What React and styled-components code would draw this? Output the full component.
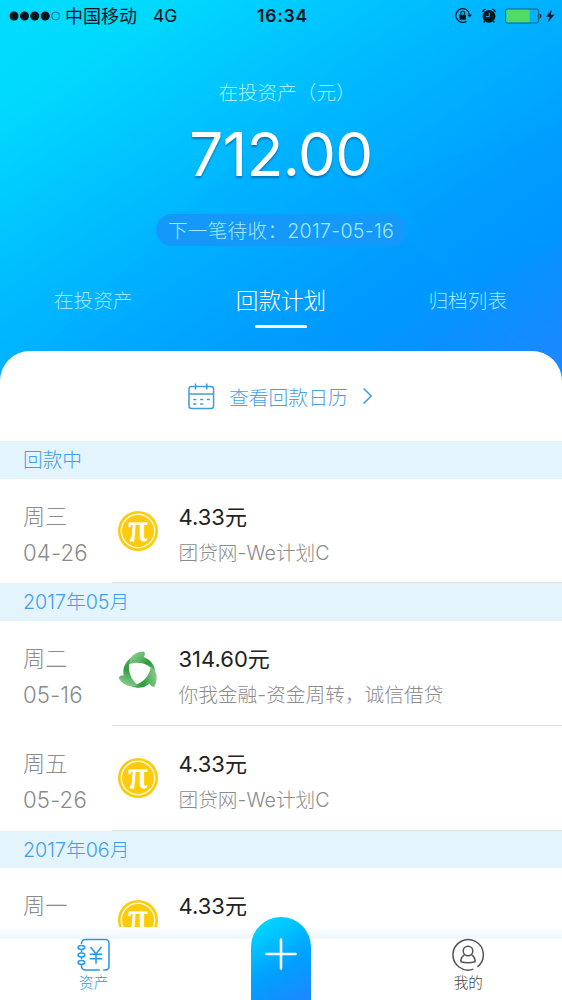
import React from "react";
import styled, { createGlobalStyle } from "styled-components";

const GlobalStyle = createGlobalStyle`
  * {
    box-sizing: border-box;
  }
  body {
    margin: 0;
    background: #fff;
    font-family: Inter, "Noto Sans CJK SC", sans-serif;
    font-weight: 300;
  }
`;

const Page = styled.div`
  position: relative;
  display: flex;
  flex-direction: column;
  width: 562px;
  height: 1000px;
  overflow: hidden;
  background: #fff;
`;

const Header = styled.header`
  position: relative;
  display: flex;
  flex-direction: column;
  align-items: center;
  flex: none;
  height: 391px;
  background: linear-gradient(146deg, #00dcff 0%, #00dafe 14%, #00b8ff 42%, #009eff 68%, #0096ff 80%, #1a88ff 96%);
`;

const Facets = styled.svg`
  position: absolute;
  top: 0;
  left: 0;
`;

const StatusBar = styled.div`
  position: relative;
  display: grid;
  grid-template-columns: 1fr 60px 1fr;
  align-items: center;
  width: 100%;
  height: 31px;
  padding: 0 6px 0 9px;
  color: #06141c;
  font-size: 17.5px;
  font-weight: 400;
`;

const StatusLeft = styled.div`
  display: flex;
  align-items: center;
  height: 30px;
`;

const Carrier = styled.span`
  margin: -1px 16px 0 4px;
  font-size: 18px;
`;

const Network = styled.span`
  font-size: 17.5px;
`;

const Clock = styled.div`
  font-size: 17.5px;
  font-weight: 600;
  text-align: center;
  white-space: nowrap;
  letter-spacing: 0.8px;
`;

const StatusRight = styled.div`
  display: flex;
  justify-content: flex-end;
`;

const Label = styled.div`
  position: relative;
  margin-top: 47px;
  padding-left: 12px;
  height: 30px;
  line-height: 30px;
  font-size: 19.6px;
  color: #a8f0ff;
`;

const Total = styled.div`
  position: relative;
  margin-top: 10px;
  height: 72px;
  line-height: 72px;
  font-size: 60px;
  font-weight: 400;
  letter-spacing: -0.5px;
  color: #fff;
  text-shadow: 0 2px 2px rgba(0, 60, 120, 0.5);
`;

const NextPay = styled.div`
  position: relative;
  margin-top: 24px;
  width: 251px;
  height: 32px;
  line-height: 34px;
  border-radius: 16px;
  background: #1499fb;
  font-size: 19.6px;
  letter-spacing: 0.3px;
  text-align: center;
  white-space: nowrap;
  color: #a3e9ff;
`;

const Tabs = styled.div`
  position: relative;
  display: grid;
  grid-template-columns: repeat(3, 1fr);
  width: 100%;
  margin-top: 37px;
`;

const Tab = styled.div`
  display: flex;
  flex-direction: column;
  align-items: center;
  margin-left: ${(props) => (props.$active ? "0" : "-1px")};
  line-height: 36px;
  font-size: ${(props) => (props.$active ? "22.6px" : "19.7px")};
  color: ${(props) => (props.$active ? "#fff" : "#a3e6ff")};
  &::after {
    content: "";
    width: 52px;
    height: 3px;
    margin-top: 6px;
    border-radius: 2px;
    background: ${(props) => (props.$active ? "#fff" : "transparent")};
  }
`;

const Card = styled.main`
  position: relative;
  flex: none;
  height: 576px;
  margin-top: -40px;
  overflow: hidden;
  border-radius: 30px 30px 0 0;
  background: #fff;
`;

const CalendarLink = styled.div`
  display: flex;
  align-items: center;
  height: 90px;
  padding-left: 188px;
  color: #4a9fe8;
  font-size: 19.8px;
`;

const CalendarText = styled.span`
  margin: 1px 14px 0 14px;
`;

const SectionTitle = styled.div`
  height: 37.5px;
  padding-left: 23px;
  line-height: 38.5px;
  background: #e3f4fd;
  color: #419eec;
  font-size: 19.7px;
`;

const Row = styled.div`
  display: flex;
  height: 104.9px;
`;

const DateColumn = styled.div`
  width: 112px;
  padding: 20px 0 0 23px;
  line-height: 36px;
  font-size: 22.2px;
  letter-spacing: 0.15px;
  color: #8b8b8b;
  white-space: nowrap;
`;

const Detail = styled.div`
  display: flex;
  flex: 1;
  padding: 32px 0 0 6px;
  border-bottom: 1px solid #e0e3e5;
`;

const Info = styled.div`
  margin: -12px 0 0 20.5px;
  white-space: nowrap;
`;

const Amount = styled.div`
  height: 36px;
  line-height: 36px;
  font-size: 22px;
  font-weight: 400;
  color: #222;
`;

const Product = styled.div`
  line-height: 36px;
  font-size: 19.7px;
  color: #8b8b8b;
`;

const TabBar = styled.nav`
  position: relative;
  display: grid;
  grid-template-columns: repeat(3, 1fr);
  height: 73px;
  background: linear-gradient(#fff, #edf6fc 11px, #fff 12px);
`;

const TabItem = styled.div`
  display: flex;
  flex-direction: column;
  align-items: center;
  padding-top: 11px;
  font-size: 14.6px;
  line-height: 22px;
  color: ${(props) => (props.$active ? "#2196f3" : "#444")};
`;

const AddButton = styled.div`
  position: absolute;
  left: 251px;
  bottom: 0;
  display: flex;
  justify-content: center;
  width: 60px;
  height: 83px;
  padding-top: 21px;
  border-radius: 30px 30px 0 0;
  background: linear-gradient(150deg, #00dcff 5%, #00a0ff 58%, #1e86ff 100%);
`;

function SignalDots() {
  return (
    <svg width="52" height="12" viewBox="0 0 52 12">
      {[5, 15.5, 25.8, 36.2].map((x) => (
        <circle key={x} cx={x} cy="6" r="4.5" fill="#06141c" />
      ))}
      <circle cx="46.7" cy="6" r="4" fill="none" stroke="#06506a" strokeWidth="0.8" />
    </svg>
  );
}

function StatusIcons() {
  return (
    <svg width="102" height="20" viewBox="454 5.5 102 20">
      {/* rotation lock */}
      <path d="M466.5 20.8A6.9 6.9 0 1 1 469.6 14" fill="none" stroke="#06141c" strokeWidth="1.2" />
      <path d="M467.2 14h4.8l-2.4 3.2z" fill="#06141c" />
      <rect x="459.5" y="14.2" width="6.4" height="5" rx="0.6" fill="#06141c" />
      <path d="M460.8 14.2v-1.6a1.9 1.9 0 0 1 3.8 0v1.6" fill="none" stroke="#06141c" strokeWidth="1.1" />
      {/* alarm */}
      <circle cx="489" cy="15.8" r="6.4" fill="#06141c" />
      <path d="M482.5 11.4q.8-2 3-2.8M495.5 11.4q-.8-2-3-2.8" stroke="#06141c" strokeWidth="1.4" fill="none" />
      <path d="M484.8 20.6l-1.2 1.4M493.2 20.6l1.2 1.4" stroke="#06141c" strokeWidth="1.4" />
      <path d="M489.3 12v4h-3.2" fill="none" stroke="#00b9fa" strokeWidth="1" />
      {/* battery */}
      <rect x="505.5" y="8.5" width="33" height="14" rx="2" fill="none" stroke="#12617f" />
      <rect x="506.3" y="9.3" width="23.5" height="12.4" rx="1" fill="#4fdb65" />
      <path d="M539.6 13q1.8.5 1.8 2.5t-1.8 2.5z" fill="#06141c" />
      <path d="M551.8 9l-5.6 7.2h3.4l-1.8 5.8 6.6-7.8h-3.6z" fill="#06141c" />
    </svg>
  );
}

function CalendarIcon() {
  return (
    <svg width="27" height="27" viewBox="0 0 27 27" fill="none" stroke="#3d9de0" strokeWidth="1.5">
      <rect x="1" y="3.5" width="24.6" height="22" rx="2.5" />
      <path d="M1 11h24.6M7.5 0.5v6M18.8 0.5v6" />
      <path d="M5.3 16.5h3M12.2 16.5h3M18.8 16.5h3M5.3 21h3M12.2 21h3" />
    </svg>
  );
}

function Arrow() {
  return (
    <svg width="12" height="18" viewBox="0 0 12 18" fill="none" stroke="#3d9de0" strokeWidth="1.6">
      <path d="M1.6 1.5L9.2 9l-7.6 7.5" />
    </svg>
  );
}

function CoinLogo() {
  return (
    <svg width="40" height="40" viewBox="0 0 40 40" overflow="visible">
      <circle cx="20" cy="20" r="20" fill="#fdcb0e" />
      <circle cx="20" cy="20" r="16.7" fill="none" stroke="#fff6d2" strokeWidth="1.5" />
      <text
        x="20"
        y="29.5"
        textAnchor="middle"
        fontFamily="Liberation Serif, serif"
        fontSize="38"
        fontWeight="400"
        fill="#fff"
        stroke="#fff"
        strokeWidth="0.8"
      >
        π
      </text>
    </svg>
  );
}

function LeafLogo() {
  return (
    <svg width="44" height="44" viewBox="0 0 44 44">
      <defs>
        <linearGradient id="leaf" gradientUnits="userSpaceOnUse" x1="20" y1="2" x2="36" y2="20">
          <stop offset="0" stopColor="#86cb8d" />
          <stop offset="0.35" stopColor="#5db566" />
          <stop offset="0.65" stopColor="#2f9b3d" />
          <stop offset="1" stopColor="#46ab4c" />
        </linearGradient>
      </defs>
      {[0, 120, 240].map((angle) => (
        <path
          key={angle}
          transform={`rotate(${angle} 22 23)`}
          d="M11.3 15.4C12 8 18 2.6 27 2.4C28.6 4.2 27.8 6.4 26.6 8C33 10 37.6 15.6 38.2 23C31.6 14.6 21.6 11.6 11.3 15.4Z"
          fill="url(#leaf)"
        />
      ))}
    </svg>
  );
}

function AssetIcon() {
  return (
    <svg width="34" height="34" viewBox="0 0 34 34" fill="none" stroke="#2196f3" strokeWidth="1.5">
      <path d="M4.6 6V5a3.5 3.5 0 0 1 3.5-3.5h20.4A3.5 3.5 0 0 1 32 5v23.5a3.5 3.5 0 0 1-3.5 3.5h-2.3M22.8 32H8.1a3.5 3.5 0 0 1-3.5-3.5V27M4.6 12.2v2.3M4.6 19v2.3" />
      <ellipse cx="4.4" cy="9.5" rx="3.3" ry="1.9" />
      <ellipse cx="4.4" cy="17" rx="3.3" ry="1.9" />
      <ellipse cx="4.4" cy="24.5" rx="3.3" ry="1.9" />
      <path d="M13.6 9l5.4 7 5.4-7M12.8 16.2h12.4M12.8 20.8h12.4M19 16v9.8" />
    </svg>
  );
}

function MineIcon() {
  return (
    <svg width="34" height="34" viewBox="0 0 34 34" fill="none" stroke="#555" strokeWidth="1.5">
      <path d="M22.4 31.1A15.2 15.2 0 1 1 26.4 28.9" />
      <circle cx="17" cy="13" r="4.8" />
      <path d="M13.4 16.8C10.8 18.4 9.7 21.3 10 23.8q7 1.8 14 0C24.3 21.3 23.2 18.4 20.6 16.8" />
    </svg>
  );
}

const sections = [
  {
    title: "回款中",
    items: [{ week: "周三", date: "04-26", amount: "4.33元", product: "团贷网-We计划C", logo: "coin" }],
  },
  {
    title: "2017年05月",
    items: [
      { week: "周二", date: "05-16", amount: "314.60元", product: "你我金融-资金周转，诚信借贷", logo: "leaf" },
      { week: "周五", date: "05-26", amount: "4.33元", product: "团贷网-We计划C", logo: "coin" },
    ],
  },
  {
    title: "2017年06月",
    items: [{ week: "周一", amount: "4.33元", logo: "coin" }],
  },
];

const LogoBox = styled.div`
  width: 40px;
  height: 40px;
  svg {
    display: block;
    margin: ${(props) => (props.$leaf ? "-4px 0 0 -1px" : "0")};
  }
`;

function PlanRow({ item }) {
  return (
    <Row>
      <DateColumn>
        <div>{item.week}</div>
        <div>{item.date}</div>
      </DateColumn>
      <Detail>
        <LogoBox $leaf={item.logo === "leaf"}>{item.logo === "leaf" ? <LeafLogo /> : <CoinLogo />}</LogoBox>
        <Info>
          <Amount>{item.amount}</Amount>
          <Product>{item.product}</Product>
        </Info>
      </Detail>
    </Row>
  );
}

function App() {
  return (
    <Page>
      <GlobalStyle />
      <Header>
        <Facets width="562" height="391">
          <path d="M270 130L0 391H562L300 130Z" fill="#008cff" opacity="0.04" />
          <path d="M380 180L562 120V391Z" fill="#0080ff" opacity="0.05" />
          <path d="M562 240L360 351L562 391Z" fill="#3c8cff" opacity="0.12" />
        </Facets>
        <StatusBar>
          <StatusLeft>
            <SignalDots />
            <Carrier>中国移动</Carrier>
            <Network>4G</Network>
          </StatusLeft>
          <Clock>16:34</Clock>
          <StatusRight>
            <StatusIcons />
          </StatusRight>
        </StatusBar>
        <Label>在投资产（元）</Label>
        <Total>712.00</Total>
        <NextPay>下一笔待收：2017-05-16</NextPay>
        <Tabs>
          <Tab>在投资产</Tab>
          <Tab $active>回款计划</Tab>
          <Tab>归档列表</Tab>
        </Tabs>
      </Header>
      <Card>
        <CalendarLink>
          <CalendarIcon />
          <CalendarText>查看回款日历</CalendarText>
          <Arrow />
        </CalendarLink>
        {sections.map((section) => (
          <section key={section.title}>
            <SectionTitle>{section.title}</SectionTitle>
            {section.items.map((item) => (
              <PlanRow key={item.week} item={item} />
            ))}
          </section>
        ))}
      </Card>
      <TabBar>
        <TabItem $active>
          <AssetIcon />
          资产
        </TabItem>
        <div />
        <TabItem>
          <MineIcon />
          我的
        </TabItem>
        <AddButton>
          <svg width="32" height="32" viewBox="0 0 32 32" stroke="#fff" strokeWidth="2.6" strokeLinecap="round">
            <path d="M1.5 16h29M16 1.5v29" />
          </svg>
        </AddButton>
      </TabBar>
    </Page>
  );
}

export default App;
